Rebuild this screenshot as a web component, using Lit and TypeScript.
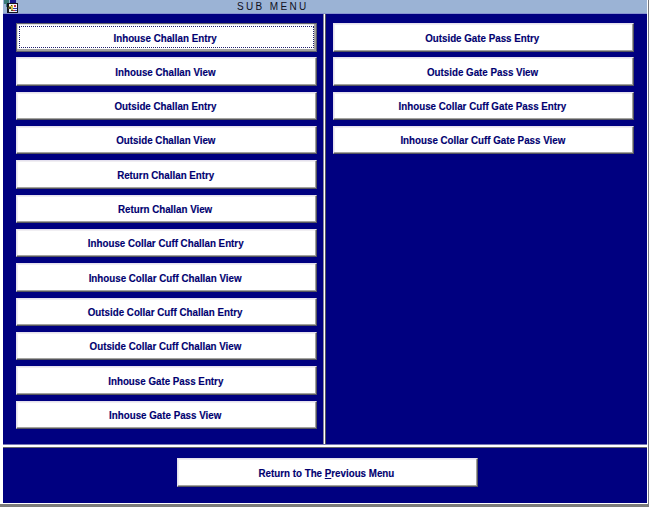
import { LitElement, html, css, svg } from "lit";
import { customElement, property } from "lit/decorators.js";

const LEFT = [
  "Inhouse Challan Entry",
  "Inhouse Challan View",
  "Outside Challan Entry",
  "Outside Challan View",
  "Return Challan Entry",
  "Return Challan View",
  "Inhouse Collar Cuff Challan Entry",
  "Inhouse Collar Cuff Challan View",
  "Outside Collar Cuff Challan Entry",
  "Outside Collar Cuff Challan View",
  "Inhouse Gate Pass Entry",
  "Inhouse Gate Pass View",
];
const RIGHT = [
  "Outside Gate Pass Entry",
  "Outside Gate Pass View",
  "Inhouse Collar Cuff Gate Pass Entry",
  "Inhouse Collar Cuff Gate Pass View",
];

@customElement("menu-button")
export class MenuButton extends LitElement {
  @property({ type: Boolean, reflect: true }) focused = false;
  static styles = css`
    :host { display: block; width: 301px; height: 28.5px; }
    button {
      display: flex; align-items: center; justify-content: center;
      box-sizing: border-box; width: 100%; height: 100%; margin: 0; padding: 1.5px 2px 0 0;
      background: #fff; color: #000070; border-radius: 0;
      border: 1px solid; border-color: #e4e0ee #55555f #55555f #e4e0ee;
      box-shadow: inset -1px -1px #a3a39f, inset 1px 1px #f0eef2;
      font: bold 11px/13px "Liberation Sans", Arial, sans-serif;
      white-space: nowrap; position: relative;
    }
    span { display: block; transform: scaleX(0.888); -webkit-text-stroke: 0.15px #000070; }
    :host([focused]) button {
      border-color: #62626c;
      box-shadow: inset -2px -2px #a3a39f, inset 1px 1px #e2e2e2;
    }
    :host([focused]) button::after {
      content: ""; position: absolute; inset: 2px 2px 3px 2px;
      border: 1px dotted #20206c;
    }
  `;
  render() {
    return html`<button><span><slot></slot></span></button>`;
  }
}

@customElement("app-root")
export class AppRoot extends LitElement {
  static styles = css`
    :host {
      display: flex; flex-direction: column; box-sizing: border-box;
      width: 649px; height: 507px; padding-left: 3px; background: #fff;
      border-right: 1px solid #77777d; border-bottom: 3px solid #7c7c7a;
      overflow: hidden; font-family: "Liberation Sans", Arial, sans-serif;
    }
    header {
      display: flex; height: 14px; box-sizing: border-box; flex: none;
      background: #9bb3d5; border-bottom: 1px solid #8793d0; margin-right: 1px;
    }
    .icon { width: 17px; height: 13px; flex: none; }
    h1 {
      margin: 0 0 0 217px; font-weight: 400; font-size: 10px; line-height: 14px;
      letter-spacing: 2.35px; color: #10101c; white-space: pre;
    }
    main {
      flex: none; height: 430px; display: flex; background: #000080; margin-right: 1px;
    }
    .column { display: flex; flex-direction: column; gap: 5.84px; padding-top: 9px; }
    .left { width: 307px; padding-left: 13px; }
    .divider {
      width: 1px; background: #fff; border-left: 1px solid #85859b; border-right: 1px solid #55555d;
    }
    .right { padding-left: 7px; }
    .rule {
      height: 2px; flex: none; background: #fff; margin-right: 1px;
      border-top: 1px solid #7777b4; border-bottom: 1px solid #66666c;
    }
    footer {
      flex: none; height: 55px; box-sizing: border-box; background: #000080; padding: 10px 0 0 174px;
      margin-right: 1px;
    }
  `;
  render() {
    return html`
      <header>
        <svg class="icon" viewBox="0 0 17 13" shape-rendering="crispEdges">
          ${svg`
          <path fill="#397a76" d="M1 0h5v4H4v3H3V4H1z"/>
          <path fill="#15158c" d="M7 0h6v3H7z"/>
          <path fill="#15151d" d="M4 3h11v10H4z"/>
          <path fill="#f4f4fa" d="M6 4h8v8H6z"/>
          <path fill="#d5c34b" d="M6 6h2v-1h2v5H8V9H6z"/>
          <path fill="#514b20" d="M5 7h3v2H5zM8 5h1v1H8zM8 10h2v1H8z"/>
          <path fill="#c52d42" d="M11 5h2v2h-2zM10 10h2v1h-2z"/>
          <path fill="#3440a5" d="M10 8h4v1h-4zM12 10h2v1h-2z"/>`}
        </svg>
        <h1>SUB MENU</h1>
      </header>
      <main>
        <div class="column left">
          ${LEFT.map((t, i) => html`<menu-button ?focused=${i === 0}>${t}</menu-button>`)}
        </div>
        <div class="divider"></div>
        <div class="column right">
          ${RIGHT.map((t) => html`<menu-button>${t}</menu-button>`)}
        </div>
      </main>
      <div class="rule"></div>
      <footer><menu-button>Return to The <u>P</u>revious Menu</menu-button></footer>
    `;
  }
}
